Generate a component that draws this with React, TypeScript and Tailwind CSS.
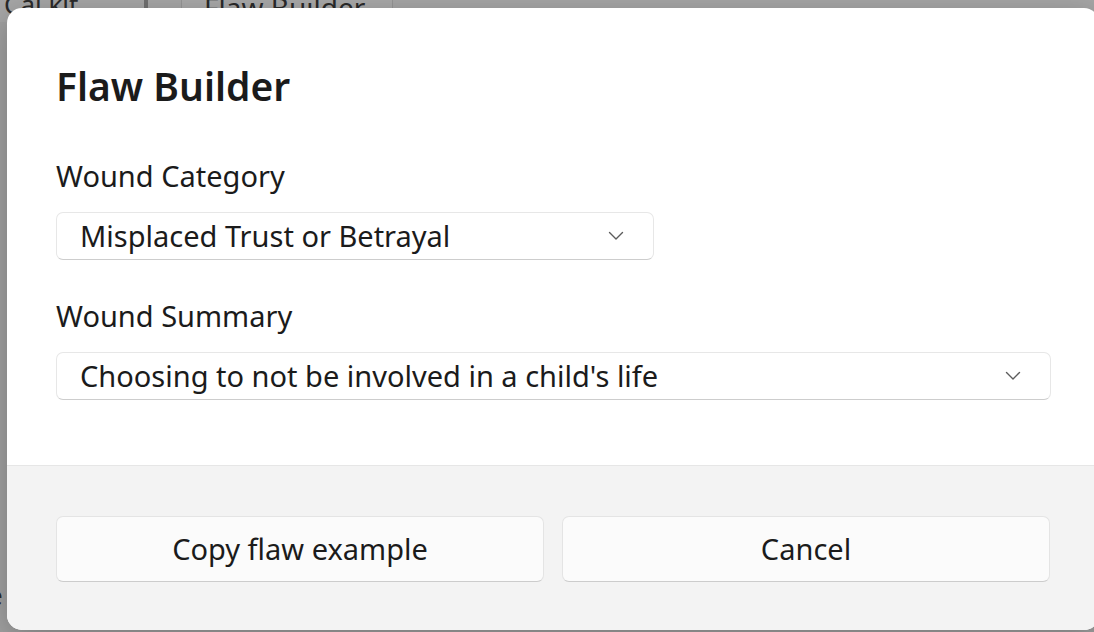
import React from "react";

const font = { fontFamily: '"Noto Sans", "Open Sans", sans-serif' };

function Chevron() {
  return (
    <svg width="16" height="10" viewBox="0 0 16 10" fill="none">
      <path d="M1.5 1.5 L8 8 L14.5 1.5" stroke="#5c5c5c" strokeWidth="1.4" strokeLinecap="round" strokeLinejoin="round" />
    </svg>
  );
}

function Select({ value, width }: { value: string; width: string }) {
  return (
    <div
      className={`${width} h-[48px] flex items-center justify-between pl-[23px] pr-[29px] bg-white rounded-[7px] border border-[#e7e7e7] border-b-[#cdcdcd] text-[29px] text-[#1b1b1b]`}
    >
      <span>{value}</span>
      <Chevron />
    </div>
  );
}

function Button({ label }: { label: string }) {
  return (
    <button className="flex-1 h-[66px] rounded-[7px] bg-[#fbfbfb] border border-[#e4e4e4] border-b-[#cccccc] text-[29px] text-[#1b1b1b] flex items-center justify-center">
      {label}
    </button>
  );
}

export default function App() {
  return (
    <div className="relative w-[1094px] h-[632px] overflow-hidden bg-[#a1a1a1]" style={font}>
      {/* what lies behind the dialog */}
      <div className="absolute left-0 top-0 w-full h-[22px] bg-[#a6a6a6]" />
      <div className="absolute left-[4px] top-[-15px] text-[26px] text-[#2a2a2a]">Cal kit</div>
      <div className="absolute left-[144px] top-0 w-[4px] h-[20px] bg-[#707070]" />
      <div className="absolute left-[181px] top-[-4px] w-[212px] h-[24px] border border-[#959595] bg-[#a9a9a9]" />
      <div className="absolute left-[204px] top-[-14px] text-[28px] text-[#2a2a2a]">Flaw Builder</div>
      <div className="absolute left-[-12px] top-[576px] text-[26px] text-[#2a2a2a]">e</div>

      {/* dialog */}
      <div className="absolute left-[7px] top-[8px] w-[1092px] h-[622px] rounded-[15px] overflow-hidden bg-white flex flex-col shadow-[0_8px_32px_rgba(0,0,0,0.25)]">
        <div className="h-[458px] px-[49px] border-b border-[#e6e6e6] flex flex-col text-[#1b1b1b]">
          <div className="mt-[54px] h-[48px] leading-[48px] text-[39px] font-semibold">Flaw Builder</div>
          <div className="mt-[46px] h-[40px] leading-[40px] text-[29px]">Wound Category</div>
          <div className="mt-[16px]">
            <Select value="Misplaced Trust or Betrayal" width="w-[598px]" />
          </div>
          <div className="mt-[36px] h-[40px] leading-[40px] text-[29px]">Wound Summary</div>
          <div className="mt-[16px]">
            <Select value="Choosing to not be involved in a child's life" width="w-[995px]" />
          </div>
        </div>
        <div className="flex-1 bg-[#f3f3f3] px-[49px] pt-[50px] flex gap-[18px] items-start">
          <Button label="Copy flaw example" />
          <Button label="Cancel" />
        </div>
      </div>
    </div>
  );
}
